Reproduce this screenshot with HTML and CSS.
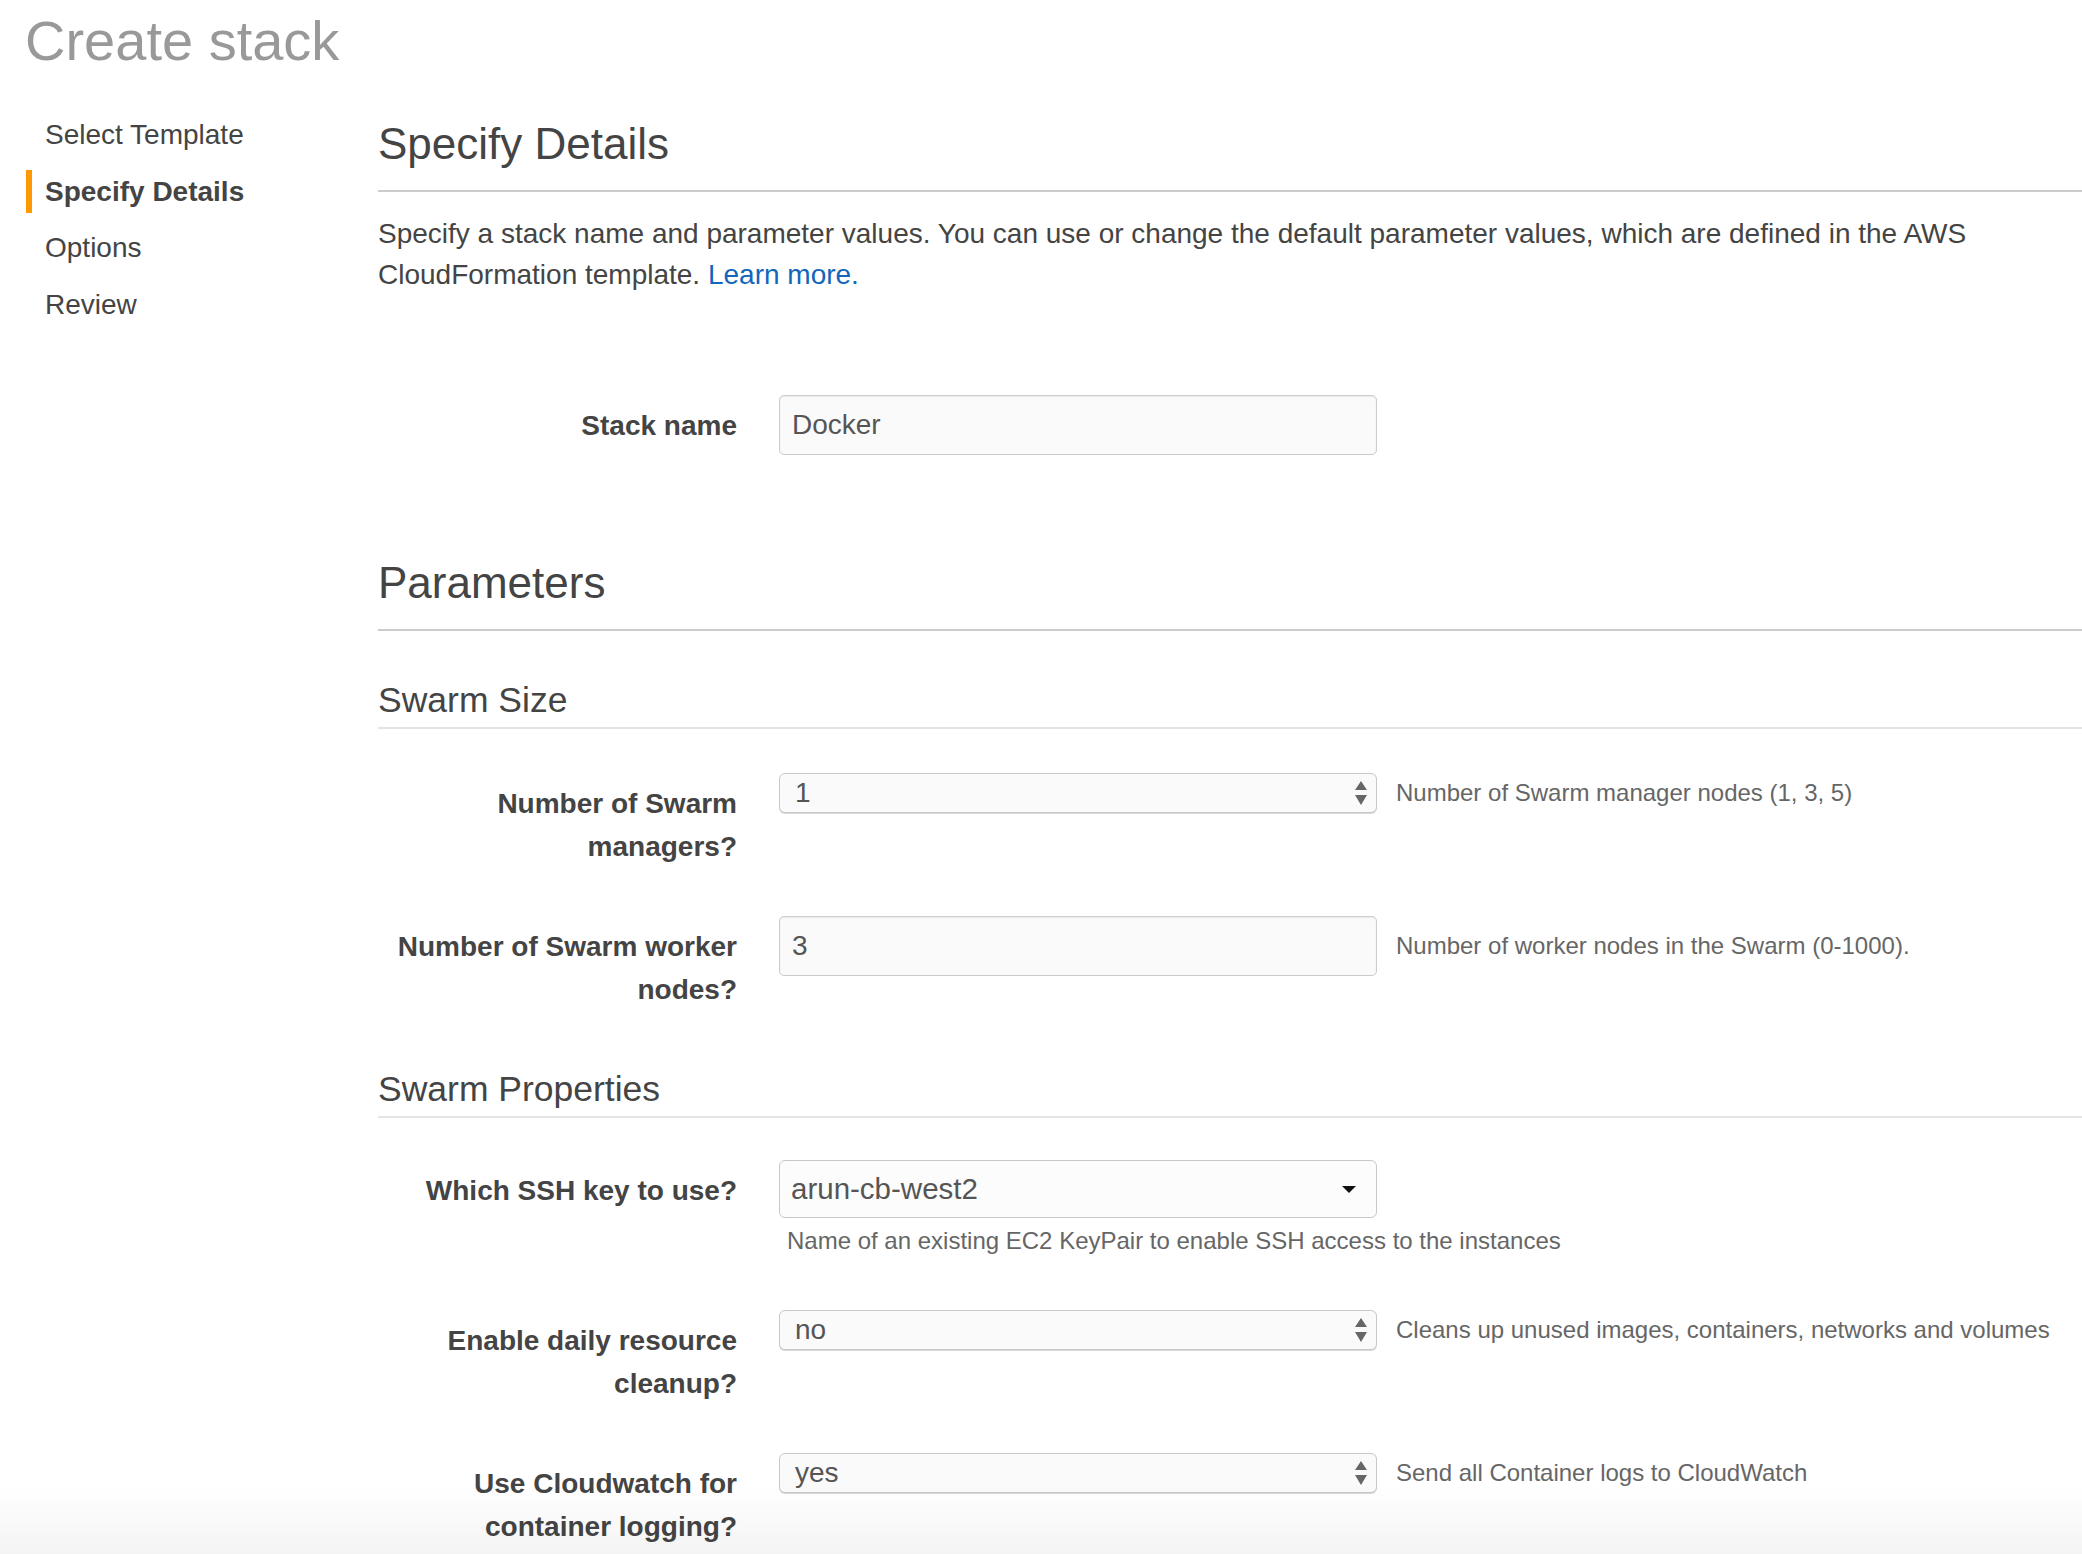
FILE: index.html
```html
<!DOCTYPE html>
<html lang="en">
<head>
<meta charset="utf-8">
<title>Create stack</title>
<link rel="stylesheet" href="styles.css">
</head>
<body>
<h1 class="page-title">Create stack</h1>
<div class="layout">
  <nav class="steps">
    <div class="step">Select Template</div>
    <div class="step step-active">Specify Details</div>
    <div class="step">Options</div>
    <div class="step">Review</div>
  </nav>
  <main class="content">
    <h2 class="section-title section-first">Specify Details</h2>
    <p class="intro">Specify a stack name and parameter values. You can use or change the default parameter values, which are defined in the AWS CloudFormation template. <a class="link" href="#">Learn more.</a></p>

    <div class="field field-stack">
      <label class="field-label">Stack name</label>
      <div class="field-body">
        <div class="control-line">
          <input class="text-input" type="text" value="Docker">
        </div>
      </div>
    </div>

    <h2 class="section-title section-params">Parameters</h2>

    <h3 class="group-title group-first">Swarm Size</h3>

    <div class="field field-first">
      <label class="field-label">Number of Swarm managers?</label>
      <div class="field-body">
        <div class="control-line">
          <div class="select select-spin"><span class="select-value">1</span>
            <svg class="spin-icon" width="12" height="24" viewBox="0 0 12 24"><path d="M6 0 L12 9 L0 9 Z" fill="#666"/><path d="M0 14 L12 14 L6 24 Z" fill="#666"/></svg>
          </div>
          <span class="help">Number of Swarm manager nodes (1, 3, 5)</span>
        </div>
      </div>
    </div>

    <div class="field">
      <label class="field-label">Number of Swarm worker nodes?</label>
      <div class="field-body">
        <div class="control-line">
          <input class="text-input" type="text" value="3">
          <span class="help">Number of worker nodes in the Swarm (0-1000).</span>
        </div>
      </div>
    </div>

    <h3 class="group-title group-next">Swarm Properties</h3>

    <div class="field field-first">
      <label class="field-label">Which SSH key to use?</label>
      <div class="field-body">
        <div class="control-line">
          <div class="select select-drop"><span class="select-value select-value-drop">arun-cb-west2</span>
            <svg class="caret-icon" width="14" height="7" viewBox="0 0 14 7"><path d="M0 0 L14 0 L7 7 Z" fill="#111"/></svg>
          </div>
        </div>
        <div class="help help-below">Name of an existing EC2 KeyPair to enable SSH access to the instances</div>
      </div>
    </div>

    <div class="field">
      <label class="field-label">Enable daily resource cleanup?</label>
      <div class="field-body">
        <div class="control-line">
          <div class="select select-spin"><span class="select-value">no</span>
            <svg class="spin-icon" width="12" height="24" viewBox="0 0 12 24"><path d="M6 0 L12 9 L0 9 Z" fill="#666"/><path d="M0 14 L12 14 L6 24 Z" fill="#666"/></svg>
          </div>
          <span class="help">Cleans up unused images, containers, networks and volumes</span>
        </div>
      </div>
    </div>

    <div class="field">
      <label class="field-label">Use Cloudwatch for container logging?</label>
      <div class="field-body">
        <div class="control-line">
          <div class="select select-spin"><span class="select-value">yes</span>
            <svg class="spin-icon" width="12" height="24" viewBox="0 0 12 24"><path d="M6 0 L12 9 L0 9 Z" fill="#666"/><path d="M0 14 L12 14 L6 24 Z" fill="#666"/></svg>
          </div>
          <span class="help">Send all Container logs to CloudWatch</span>
        </div>
      </div>
    </div>
  </main>
</div>
</body>
</html>
```
FILE: styles.css
```css
html, body {
  margin: 0;
  padding: 0;
  background: #ffffff;
}

body {
  font-family: "Liberation Sans", Arial, Helvetica, sans-serif;
  color: #444444;
  overflow: hidden;
  height: 1554px;
}

body::after {
  content: "";
  position: fixed;
  left: 0;
  right: 0;
  bottom: 0;
  height: 70px;
  background: linear-gradient(to bottom, rgba(0, 0, 0, 0), rgba(0, 0, 0, 0.045));
  pointer-events: none;
}

.page-title {
  margin: 0;
  padding: 9px 0 0 25px;
  font-size: 56px;
  line-height: 64px;
  font-weight: normal;
  color: #999999;
}

.layout {
  display: flex;
  align-items: flex-start;
  margin-top: 27px;
}

.steps {
  width: 352px;
  flex: 0 0 352px;
  padding: 13px 0 0 26px;
  display: flex;
  flex-direction: column;
  gap: 13.5px;
}

.step {
  font-size: 28px;
  line-height: 43px;
  color: #444444;
  border-left: 6px solid transparent;
  padding-left: 13px;
}

.step-active {
  border-left-color: #ff9900;
  font-weight: bold;
}

.content {
  flex: 1;
  min-width: 0;
}

.section-title {
  margin: 0;
  font-size: 44px;
  line-height: 52px;
  font-weight: normal;
  color: #444444;
  padding-bottom: 20px;
  border-bottom: 2px solid #cccccc;
}

.section-first {
  margin-top: 18px;
}

.section-params {
  margin-top: 102px;
}

.intro {
  margin: 21px 0 0 0;
  font-size: 28px;
  line-height: 41px;
  color: #444444;
}

.link {
  color: #1166bb;
  text-decoration: none;
}

.group-title {
  margin: 0;
  font-size: 35.5px;
  line-height: 42px;
  font-weight: normal;
  color: #444444;
  padding-bottom: 6px;
  border-bottom: 2px solid #e4e4e4;
}

.group-first {
  margin-top: 48px;
}

.group-next {
  margin-top: 57px;
}

.field {
  display: flex;
  align-items: flex-start;
  margin-top: 48px;
}

.field-stack {
  margin-top: 100px;
}

.field-first {
  margin-top: 44px;
}

.group-next + .field-first {
  margin-top: 42px;
}

.field-label {
  width: 359px;
  flex: 0 0 359px;
  margin-right: 42px;
  padding-top: 9px;
  text-align: right;
  font-size: 28px;
  line-height: 43px;
  font-weight: bold;
  color: #444444;
}

.field-body {
  flex: 1;
  min-width: 0;
}

.control-line {
  display: flex;
  align-items: center;
  gap: 19px;
}

.text-input {
  box-sizing: border-box;
  width: 598px;
  height: 60px;
  margin: 0;
  padding: 0 12px;
  border: 1px solid #cccccc;
  border-radius: 5px;
  background: #fafafa;
  box-shadow: inset 0 1px 2px rgba(0, 0, 0, 0.07);
  font-family: "Liberation Sans", Arial, sans-serif;
  font-size: 28px;
  color: #555555;
  outline: none;
  flex: 0 0 598px;
}

.select {
  box-sizing: border-box;
  width: 598px;
  flex: 0 0 598px;
  display: flex;
  align-items: center;
  justify-content: space-between;
  border: 1px solid #c8c8c8;
  border-radius: 6px;
  background: #fafafa;
  font-size: 28px;
  color: #555555;
}

.select-spin {
  height: 40px;
  padding: 0 9px 0 15px;
  box-shadow: 0 1px 0 #d6d6d6;
}

.select-drop {
  height: 58px;
  padding: 0 20px 0 11px;
  background: #fcfcfc;
}

.select-value-drop {
  font-size: 29.5px;
}

.spin-icon,
.caret-icon {
  display: block;
  flex: 0 0 auto;
}

.help {
  font-size: 24px;
  line-height: 30px;
  color: #666666;
  white-space: nowrap;
}

.help-below {
  margin-top: 6px;
  margin-bottom: 4px;
  padding-left: 8px;
  line-height: 34px;
}
```
